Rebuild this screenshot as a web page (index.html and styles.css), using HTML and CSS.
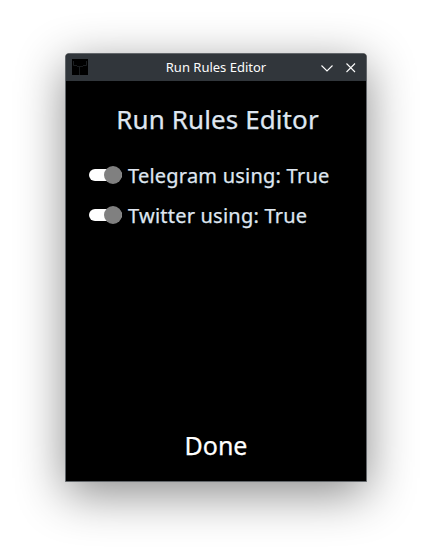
FILE: index.html
```html
<!DOCTYPE html>
<html lang="en">
<head>
<meta charset="utf-8">
<title>Run Rules Editor</title>
<link rel="stylesheet" href="styles.css">
</head>
<body>
<main class="window">
  <header class="titlebar">
    <svg class="app-icon" width="16" height="16" viewBox="0 0 16 16"><rect width="16" height="16" fill="#000"/><path d="M1.500 2V6.500H5M14.500 2V6.500H11M7.500 8V16" fill="none" stroke="#1b1e20"/><path d="M5 7.500H11" stroke="#181b1d"/></svg>
    <span class="caption">Run Rules Editor</span>
    <svg class="controls" width="36" height="12" viewBox="0 0 36 12"><path d="M.5 3.500L6 9L11.500 3.500M25.500 1.500L34 10M34 1.500L25.500 10" fill="none" stroke="#fcfcfc" stroke-width="1.100"/></svg>
  </header>
  <section class="content">
    <h1 class="heading">Run Rules Editor</h1>
    <div class="rules">
      <label class="rule"><span class="switch"><span class="knob"></span></span><span>Telegram using: True</span></label>
      <label class="rule"><span class="switch"><span class="knob"></span></span><span>Twitter using: True</span></label>
    </div>
    <button class="done">Done</button>
  </section>
</main>
</body>
</html>
```
FILE: styles.css
```css
* { box-sizing: border-box; }
html { background: #fff; }
body { height: 560px; margin: 0; padding: 53px 0 0 65px; font-family: "Noto Sans", sans-serif; overflow: hidden; }
.window { width: 302px; height: 429px; display: flex; flex-direction: column; background: #000; border: 1px solid #62666a; border-radius: 4px 4px 0 0; box-shadow: 0 12px 48px rgba(0,0,0,.46); overflow: hidden; }
.titlebar { height: 27px; flex: none; display: grid; grid-template-columns: 36px 1fr 36px; align-items: center; background: #31363b; padding: 0 9px 0 6px; }
.app-icon { margin-top: -1px; }
.caption { text-align: center; font-size: 13px; line-height: 18px; color: #fcfcfc; margin: -2px 0 0 3px; }
.content { flex: 1; display: flex; flex-direction: column; align-items: center; color: #dfe6f0; -webkit-text-stroke: .25px; }
.heading { margin: 20px 0 0 3px; font-size: 26px; line-height: 36px; font-weight: 400; letter-spacing: .1px; }
.rules { align-self: stretch; margin: 18px 0 0 23px; }
.rule { display: flex; align-items: center; height: 40px; gap: 6px; font-size: 20px; letter-spacing: .22px; white-space: nowrap; }
.switch { width: 33px; height: 12px; border-radius: 6px; background: #fff; display: flex; align-items: center; justify-content: flex-end; }
.knob { width: 18px; height: 18px; border-radius: 50%; background: #808080; flex: none; }
.done { margin: auto 0 18px; padding: 0; border: 0; background: none; color: #fff; font: 400 25px/36px "Noto Sans", sans-serif; -webkit-text-stroke: .25px; }
```
